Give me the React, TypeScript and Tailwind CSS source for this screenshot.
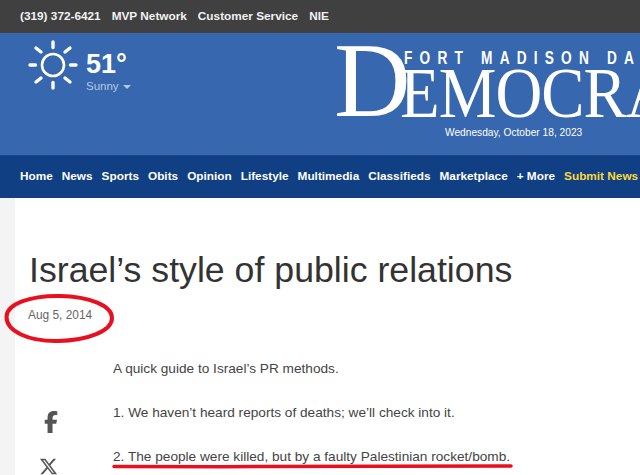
import React from 'react';
import { FaFacebookF, FaXTwitter } from 'react-icons/fa6';

const topLinks = ['(319) 372-6421', 'MVP Network', 'Customer Service', 'NIE'];
const navLinks = ['Home', 'News', 'Sports', 'Obits', 'Opinion', 'Lifestyle', 'Multimedia', 'Classifieds', 'Marketplace', '+ More'];

const SunIcon: React.FC = () => (
  <svg width="50" height="50" viewBox="0 0 50 50" fill="none" stroke="white" strokeLinecap="round" strokeWidth="3.4">
    <circle cx="25" cy="25" r="11" strokeWidth="2.6" />
    <path d="M25 2v5.5M25 42.5V48M2 25h5.5M42.5 25H48M8 8l5 4M42 8l-5 4M8 42l5-4M42 42l-5-4" />
  </svg>
);

const App: React.FC = () => {
  return (
    <div className="relative h-[475px] w-[640px] overflow-hidden bg-white font-['Liberation_Sans',sans-serif]">
      <div className="flex h-[33px] items-center gap-[11px] bg-[#404040] pl-[20px] text-[11.8px] font-bold text-[#f2f2f2]">
        {topLinks.map(link => (
          <span key={link} className="whitespace-nowrap">{link}</span>
        ))}
      </div>

      <header className="flex h-[122px] border-t border-[#3a6ab2] bg-[#3767ae] text-white">
        <div className="flex w-[337px] shrink-0 items-start pl-[28px] pt-[6px]">
          <SunIcon />
          <div className="ml-[8px]">
            <div className="mt-[10px] text-[27px] leading-[28px] font-bold">51°</div>
            <div className="mt-[2px] flex items-center gap-[4px] text-[11.5px] leading-[13px] text-[#b5c8e6]">
              Sunny
              <span className="mt-[1px] h-0 w-0 border-x-[4px] border-t-[4px] border-x-transparent border-t-[#b5c8e6]" />
            </div>
          </div>
        </div>
        <div className="relative flex-1 font-['Liberation_Serif',serif]">
          <div className="absolute left-[-3px] top-[-13px] whitespace-nowrap text-[106px] leading-[120px]">D</div>
          <div className="absolute left-[63px] top-[11px] origin-left scale-x-[0.9] whitespace-nowrap text-[72px] leading-[96px] tracking-[-1px]">EMOCRAT</div>
          <div className="absolute left-[67px] top-[14px] origin-left scale-x-[0.72] whitespace-nowrap font-['Liberation_Sans',sans-serif] text-[19px] leading-[20px] font-bold tracking-[10px]">FORT MADISON DAILY</div>
          <div className="absolute left-[108px] top-[92px] whitespace-nowrap font-['Liberation_Sans',sans-serif] text-[10.2px] leading-[14px]">Wednesday, October 18, 2023</div>
        </div>
      </header>

      <nav className="flex h-[43px] items-center gap-[9px] border-t border-[#1a4a8c] bg-[#113f83] pl-[20px] text-[11.8px] font-bold text-white">
        {navLinks.map(link => (
          <span key={link} className="whitespace-nowrap">{link}</span>
        ))}
        <span className="whitespace-nowrap text-[#fcd93a]">Submit News</span>
      </nav>

      <div className="flex h-[277px]">
        <div className="w-[15px] shrink-0 bg-[#f4f4f4]" />
        <main className="flex-1 pl-[14px]">
          <h1 className="mt-[52px] whitespace-nowrap text-[35.7px] leading-[40px] font-normal text-[#333]">Israel’s style of public relations</h1>
          <div className="mt-[18px] -ml-[1px] text-[11.9px] leading-[14px] text-[#666]">Aug 5, 2014</div>
          <div className="flex">
            <div className="flex w-[84px] shrink-0 flex-col items-start pl-[11px] pt-[89px] text-[#555]">
              <FaFacebookF size={22} />
              <FaXTwitter size={19} className="mt-[24px] -ml-[1px]" />
            </div>
            <article className="pt-[37px] text-[13.65px] leading-[20px] text-[#444]">
              <p className="mb-[24px] whitespace-nowrap">A quick guide to Israel’s PR methods.</p>
              <p className="mb-[24px] whitespace-nowrap">1. We haven’t heard reports of deaths; we’ll check into it.</p>
              <p className="whitespace-nowrap">2. The people were killed, but by a faulty Palestinian rocket/bomb.</p>
            </article>
          </div>
        </main>
      </div>

      {/* red marker annotations drawn over the page */}
      <svg className="absolute left-0 top-0" width="640" height="475" fill="none" stroke="#e8101f" strokeLinecap="round">
        <path d="M6.500 317C6.500 304 30 295.500 60 296C90 296.500 112 306 112 318C112 331 88 340.500 58 341C28 341.500 6.500 331 6.500 317Z" strokeWidth="4" />
        <path d="M114 466.500C250 467 400 466 511 466" strokeWidth="3.500" />
      </svg>
    </div>
  );
};

export default App;
